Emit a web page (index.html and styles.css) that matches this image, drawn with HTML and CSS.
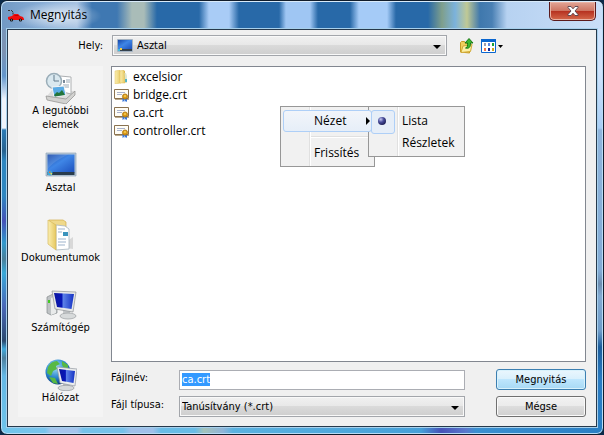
FILE: index.html
```html
<!DOCTYPE html>
<html lang="hu">
<head>
<meta charset="utf-8">
<title>Megnyitás</title>
<link rel="stylesheet" href="styles.css">
</head>
<body>
<svg class="defs" width="0" height="0" aria-hidden="true">
  <defs>
    <linearGradient id="screen" x1="0" y1="0" x2="1" y2="1"><stop offset="0" stop-color="#1747a8"/><stop offset=".45" stop-color="#3f86e6"/><stop offset="1" stop-color="#1d50bd"/></linearGradient>
    <linearGradient id="navy" x1="0" y1="0" x2="1" y2="0"><stop offset="0" stop-color="#0a14a0"/><stop offset=".4" stop-color="#0717b8"/><stop offset=".45" stop-color="#5d83e8"/><stop offset="1" stop-color="#1431c4"/></linearGradient>
    <linearGradient id="folder" x1="0" y1="0" x2="1" y2="0"><stop offset="0" stop-color="#fbeeb0"/><stop offset="1" stop-color="#e6c860"/></linearGradient>
    <radialGradient id="globe" cx=".4" cy=".3" r=".7"><stop offset="0" stop-color="#a5e2fa"/><stop offset=".6" stop-color="#2a86cc"/><stop offset="1" stop-color="#0b3f86"/></radialGradient>
    <radialGradient id="ball" cx=".35" cy=".3" r=".7"><stop offset="0" stop-color="#c5c8f0"/><stop offset=".5" stop-color="#4a4e9c"/><stop offset="1" stop-color="#20225c"/></radialGradient>
    <symbol id="cert" viewBox="0 0 16 14">
      <path d="M.5 1.500h14v9H.5z" fill="#fffdf6" stroke="#8a7250"/>
      <path d="M1 11.500h14" stroke="#b9a98d"/>
      <path d="M3 4.500h8M3 6.500h5" stroke="#a9b2cc"/>
      <path d="M8.500 10v4l1.500-1 .5 1v-4zM11 10v4l.5-1 1.500 1v-4z" fill="#3b78d8"/>
      <circle cx="11" cy="8.500" r="2.600" fill="#d99a19" stroke="#a66b08" stroke-width=".7"/>
      <circle cx="11" cy="8" r="1" fill="#f7cf55"/>
    </symbol>
  </defs>
</svg>
<main class="window">
  <header class="titlebar">
    <svg class="app-icon" viewBox="0 0 16 16" aria-hidden="true">
      <path d="M0 2.500h2M3 2.500h1M4 3.500h1M5 4.500v2" stroke="#333" stroke-width="1" fill="none"/>
      <path d="M0 9l4-1 2-2h4l2 2 3 1 1 2v1H1L0 11z" fill="#f00d0d"/>
      <path d="M6 8l1-1h3l1 1z" fill="#c30000"/>
      <circle cx="3.500" cy="12" r="1.600" fill="#111"/><circle cx="12.500" cy="12" r="1.600" fill="#111"/>
      <path d="M3 12h1M12 12h1" stroke="#bbb"/>
    </svg>
    <h1>Megnyitás</h1>
    <button class="close" type="button" aria-label="Bezárás">
      <svg viewBox="0 0 12 10" aria-hidden="true"><path d="M1 .5h3l2 2.300L8 .5h3v1L8 5l3 3.500v1H8L6 7.200 4 9.500H1v-1L4 5 1 1.500z" fill="#fff" stroke="#564049" stroke-width=".9"/></svg>
    </button>
  </header>
  <form class="client">
    <div class="location">
      <label for="place">Hely:</label>
      <div class="combo place">
        <svg class="combo-icon" viewBox="0 0 16 13" aria-hidden="true"><path d="M.5.5h15v12H.5z" fill="#c3ccd6" stroke="#a3b2c2"/><path d="M1 1h14v9H1z" fill="url(#screen)"/><path d="M1 10h14v2H1z" fill="#35424e"/><path d="M1 10h2v2H1z" fill="#3ec0e0"/><path d="M3 9h2v2H3z" fill="#f6cf45"/></svg>
        <select id="place"><option>Asztal</option></select>
      </div>
      <button class="tool up" type="button" aria-label="Egy szinttel feljebb">
        <svg viewBox="0 0 14 16" aria-hidden="true">
          <path d="M.5 4.500l1-1h3l1 1.500h4V15l-9-1z" fill="#f0cf5d" stroke="#c69c25"/>
          <path d="M1 14.500L3 8l9-1.500-1.500 7z" fill="#fdf0a4" stroke="#d2aa36"/>
          <path d="M5.500 10C8 9.500 7.500 7 7.500 5H5l4-4.500L13 5h-2.500c.3 4-1.500 6-5 5z" fill="#3db92f" stroke="#12700f" stroke-width=".9"/>
        </svg>
      </button>
      <button class="tool view" type="button" aria-label="Nézet">
        <svg viewBox="0 0 22 14" aria-hidden="true">
          <path d="M.5.5h14v13H.5z" fill="#fff" stroke="#0a66cf"/><path d="M0 0h15v3H0z" fill="#0a66cf"/>
          <path d="M3 4h2v3H3z" fill="#9d9dad"/><path d="M7 4h2v3H7z" fill="#5b86e5"/><path d="M11 4h2v3h-2z" fill="#1da037"/>
          <path d="M3 9h2v3H3z" fill="#f0764d"/><path d="M7 9h2v3H7z" fill="#152b98"/><path d="M11 9h2v3h-2z" fill="#d2a51d"/>
          <path d="M17 6h5l-2.500 3z" fill="#000"/>
        </svg>
      </button>
    </div>
    <nav class="places" aria-label="Helyek">
      <a href="#recent" class="item">
        <svg viewBox="0 0 32 32" aria-hidden="true">
          <path d="M2 24l5-6 23 1-9 9z" fill="#ddd"/>
          <path d="M15 4l11 1v17l-12-3z" fill="#fff" stroke="#adb0b2"/><path d="M18 8h2v3h-2z" fill="#789"/><path d="M21 8h4M21 10h4M18 13h6M18 15h6" stroke="#9aa9b6"/>
          <circle cx="9" cy="9" r="7.500" fill="#d9e8ef" stroke="#9aadb8" stroke-width="1.500"/><path d="M9 3v6h5" fill="none" stroke="#647c8e"/>
          <path d="M7 15l12-1 2 9-12 2z" fill="#5aabe4" stroke="#f6f6f6"/><path d="M9 23l3-3 2 1 3-3 3 5-10 1.500z" fill="#23753a"/>
          <path d="M1 24l20 3 9-8v4l-9 9L2 28z" fill="#d2d2d0" stroke="#8d8d8b" stroke-width=".7"/>
        </svg><span>A legutóbbi elemek</span></a>
      <a href="#desktop" class="item">
        <svg viewBox="0 0 32 32" aria-hidden="true"><path d="M1 4h30v23H1z" fill="#b8c9d8" stroke="#91a5b8" stroke-width=".7"/><path d="M2.500 5.500h27v18h-27z" fill="url(#screen)"/><path d="M2.500 5.500h21c-9 4-17 9-21 15z" fill="#fff" opacity=".12"/><path d="M2.500 23h27v3h-27z" fill="#293c4d"/><circle cx="5" cy="24" r="2.500" fill="#39a9dc"/><path d="M4 22.500h1.500v1.500H4z" fill="#ed692f"/><path d="M5.500 24H7v1.500H5.500z" fill="#f4d94a"/></svg>
        <span>Asztal</span></a>
      <a href="#documents" class="item">
        <svg viewBox="0 0 32 32" aria-hidden="true"><path d="M14 28l14 2V18z" fill="#d8d8d8"/><path d="M4 1h14l3 2v22l-8 4-9-5z" fill="#efd98b" stroke="#d2ae4b" stroke-width=".7"/><path d="M11 6l9 1 4 3v20l-13 1z" fill="#fff" stroke="#a8b6c2" stroke-width=".8"/><path d="M13 10h7M13 13h4M13 20h8M13 23h8M13 26h7" stroke="#9db3cc"/><path d="M18 13h5v4h-5z" fill="#3b94bd"/><path d="M3 1l8 5v25l-8-6z" fill="url(#folder)" stroke="#d6b95d" stroke-width=".7"/></svg>
        <span>Dokumentumok</span></a>
      <a href="#computer" class="item">
        <svg viewBox="0 0 32 32" aria-hidden="true"><path d="M2 8l6-3 4 2v17l-6 2-4-2z" fill="#bfc3c5" stroke="#858b8e" stroke-width=".7"/><path d="M6 9l5-2v17l-5 2z" fill="#e9ebeb"/><path d="M3 11h2v3H3z" fill="#42cb22"/><path d="M18 21h7v5h-7z" fill="#c5c8ca"/><ellipse cx="23" cy="27" rx="8" ry="3" fill="#d7dadb" stroke="#999da0" stroke-width=".7"/><path d="M7 2l24 1-3 20-18-3z" fill="#e6e8e8" stroke="#8c9195" stroke-width=".7"/><path d="M9 4l20 1-2.500 15L12 18z" fill="url(#navy)"/></svg>
        <span>Számítógép</span></a>
      <a href="#network" class="item">
        <svg viewBox="0 0 32 32" aria-hidden="true"><circle cx="13" cy="13" r="12.500" fill="url(#globe)"/><path d="M3 8c2-4 5-6 9-6l3 3-4 2 1 3-4 2-2 5-4-3zM17 2l6 4v3h-4l-2-3zM4 18l6 1 3 6-5-1z" fill="#58b944"/><path d="M18 24h7v4h-7z" fill="#bbbfc2"/><ellipse cx="21" cy="29" rx="8" ry="2.700" fill="#d6d9da" stroke="#969b9f" stroke-width=".7"/><path d="M12 8l20 2-2 17-15-3z" fill="#eceeee" stroke="#9298a0" stroke-width=".7"/><path d="M14 10l16 2-1.500 12L17 22z" fill="url(#navy)"/></svg>
        <span>Hálózat</span></a>
    </nav>
    <section class="files">
      <ul>
        <li><svg viewBox="0 0 16 14" aria-hidden="true"><path d="M7 1h4v12H7z" fill="#ddb84c"/><path d="M9 3h3l1 3v7H8z" fill="#dfe6d0"/><path d="M11 9h2v3h-2z" fill="#4bb5cf"/><path d="M1 1l5-1 1 13-6 1z" fill="url(#folder)" stroke="#e1c362" stroke-width=".5"/><path d="M6 1l4-1 1 13H6z" fill="url(#folder)" stroke="#ddba52" stroke-width=".5"/></svg>excelsior</li>
        <li><svg viewBox="0 0 16 14" aria-hidden="true"><use href="#cert"/></svg>bridge.crt</li>
        <li><svg viewBox="0 0 16 14" aria-hidden="true"><use href="#cert"/></svg>ca.crt</li>
        <li><svg viewBox="0 0 16 14" aria-hidden="true"><use href="#cert"/></svg>controller.crt</li>
      </ul>
      <div class="menu" role="menu">
        <button class="menu-item active" type="button" role="menuitem">Nézet<svg class="arrow" viewBox="0 0 4 8" aria-hidden="true"><path d="M0 0l4 4-4 4z"/></svg></button>
        <hr>
        <button class="menu-item" type="button" role="menuitem">Frissítés</button>
      </div>
      <div class="menu submenu" role="menu">
        <button class="menu-item checked" type="button" role="menuitemradio" aria-checked="true"><svg class="dot" viewBox="0 0 8 8" aria-hidden="true"><circle cx="4" cy="4" r="4" fill="url(#ball)"/></svg>Lista</button>
        <button class="menu-item" type="button" role="menuitemradio" aria-checked="false">Részletek</button>
      </div>
    </section>
    <div class="fields">
      <label for="filename">Fájlnév:</label>
      <input id="filename" type="text" value="ca.crt" autocomplete="off" spellcheck="false">
      <button class="action primary" type="submit">Megnyitás</button>
      <label for="type">Fájl típusa:</label>
      <div class="combo"><select id="type"><option>Tanúsítvány (*.crt)</option></select></div>
      <button class="action" type="button">Mégse</button>
    </div>
  </form>
</main>
<script src="script.js"></script>
</body>
</html>
```
FILE: styles.css
```css
* { box-sizing: border-box; }
body {
  margin: 0;
  background: #0b2a4a;
  color: #000;
  font: 11px/14px "DejaVu Sans Condensed", "Noto Sans", sans-serif;
}
button, input, select { font: inherit; color: inherit; }
svg { display: block; flex: none; }
.defs { position: absolute; }

.window {
  display: flex;
  flex-direction: column;
  min-height: 100vh;
  padding: 0 6px 7px;
  border: 1px solid #101c2b;
  border-radius: 7px;
  box-shadow: inset 0 0 0 1px #b9dcf5;
  background:
    linear-gradient(90deg, #6fc4ea, #78c4ec 44px, #a5c4ec 50px 76px, #74c2ea 82px 122px, #9fc0ea 130px 152px, #68bce6 160px 194px, #a3c2ba 203px, #8fb4d8 222px, #5ab2e0 232px, #46a0d8 420px, #4652b8 440px, #5a78cc 465px, #3a90d0 475px, #2a7fc4) bottom / 100% 8px no-repeat,
    linear-gradient(#cfe3fc 0, #cfe3fc 70px, #a8cdf5 127px, #8fb4dc 129px, #83abd5 270px, #6d8db0 283px, #83aad2 295px, #6f9cc9 330px, #1c5d9c 346px, #2a7cc4 380px, #2a7fc4) right / 8px 100% no-repeat,
    linear-gradient(#7199c4 0, #7d93b2 50px, #6396cb 75px, #eef3fb 98px, #eef3fb 127px, #2a7ab5 129px, #28628f 150px, #2e86c0 160px, #2e86c0 195px, #4552b8 220px, #3098cc 242px, #4a7f9a 258px, #38a8d8 272px, #4a68b8 305px, #2a4a70 340px, #3fa9dc 348px, #4d7f9e 357px, #64b8e6 375px, #6fc4ea) left / 8px 100% no-repeat,
    #2a76b5;
}
.titlebar {
  display: flex;
  align-items: flex-start;
  height: 28px;
  margin: 0 -5px;
  padding: 0 6px 0 5px;
  border-radius: 6px 6px 0 0;
  border-top: 1px solid #d9ebfa;
  background:
    radial-gradient(ellipse at center, #ffffffb0, #ffffff00 70%) 10px 0 / 90px 28px no-repeat,
    linear-gradient(90deg, #7199c4, #88add6 40px, #a8c3e2 75px, #3f78b2 90px, #3f78b2 115px, #a9bcb8 130px, #a9bcb8 142px, #2869a8 155px, #2869a8 197px, #a9ccf6 207px, #a9ccf6 227px, #2869a8 237px, #2869a8 277px, #9fc6f3 284px, #9fc6f3 308px, #2869a8 316px, #2869a8 348px, #a5cbf7 357px, #a5cbf7 385px, #2869a8 394px, #2869a8 426px, #7f9f8c 440px, #7bb2dc 453px, #c0c995 465px, #3f78ad 478px, #4a80b4 490px, #b7d2f1 505px, #c9def8);
}
.titlebar h1 { flex: 1; margin: 4px 0 0 6px; font: 400 12px/17px "Open Sans", "Noto Sans", sans-serif; }
.app-icon { width: 16px; height: 16px; margin: 6px 0 0 1px; }
.close {
  display: grid;
  place-items: center;
  width: 47px;
  height: 19px;
  padding: 0;
  border: 1px solid #5b1a1c;
  border-top: 0;
  border-radius: 0 0 5px 5px;
  box-shadow: inset 0 0 0 1px #e9b3a5;
  background: linear-gradient(#e3a596, #ce7663 48%, #b5301f 50%, #d5694b);
}
.close svg { width: 12px; height: 10px; }

.client {
  flex: 1;
  display: grid;
  grid-template: auto 1fr auto / 85px 1fr;
  column-gap: 8px;
  padding: 5px 10px 9px;
  border: 1px solid #26394c;
  box-shadow: 0 0 0 1px #a7d0ec;
  background: #f0f0f0;
}
.location { grid-column: 1 / -1; display: flex; align-items: center; padding-bottom: 10px; }
.location label { width: 85px; text-align: right; }
.place { flex: 1; margin: 0 13px 0 9px; }
.tool { padding: 0; border: 0; background: none; }
.up { width: 14px; }
.view { width: 22px; margin: 0 83px 0 7px; }

.combo {
  position: relative;
  display: flex;
  align-items: center;
  height: 21px;
  border: 1px solid #a3a6ab;
  box-shadow: inset 0 0 0 1px #f9f9f9;
  background: linear-gradient(#f1f1f1, #e8e8e8 48%, #dadada 50%, #cecece);
}
.combo::after {
  content: "";
  position: absolute;
  right: 5px;
  top: 9px;
  border: 4px solid transparent;
  border-top-color: #000;
  border-bottom: 0;
  pointer-events: none;
}
.combo select {
  flex: 1;
  min-width: 0;
  height: 19px;
  padding: 0 20px 0 2px;
  border: 0;
  outline: 0;
  appearance: none;
  background: none;
}
.combo-icon { width: 16px; height: 13px; margin: 0 2px 0 4px; }

.places {
  grid-row: 2 / 4;
  display: flex;
  flex-direction: column;
  gap: 24px;
  padding-top: 6px;
  background: #f4f4f4;
}
.item { display: flex; flex-direction: column; align-items: center; color: inherit; text-align: center; text-decoration: none; }
.item:first-child { margin-bottom: -7px; }
.item svg { width: 32px; height: 32px; }
.item span { max-width: 80px; }
.item:first-child span { max-width: 64px; }

.files { position: relative; min-height: 190px; border: 1px solid #828790; background: #fff; }
.files ul { margin: 0; padding: 1px 0 0 2px; list-style: none; font: 12px/18px "Open Sans", "Noto Sans", sans-serif; }
.files li { display: flex; align-items: center; gap: 3px; }
.files li svg { width: 16px; height: 14px; }

.menu {
  position: absolute;
  left: 168px;
  top: 39px;
  width: 95px;
  padding: 3px 2px 2px;
  border: 1px solid #979797;
  background: linear-gradient(90deg, #f1f1f1 28px, #e0e0e0 28px 29px, #fff 29px 30px, #f1f1f1 30px);
  font: 12px/16px "Open Sans", "Noto Sans", sans-serif;
}
.submenu { z-index: 1; left: 256px; width: 97px; }
.menu-item {
  position: relative;
  display: flex;
  align-items: center;
  width: 100%;
  height: 22px;
  padding: 0 0 0 30px;
  border: 1px solid transparent;
  border-radius: 3px;
  background: none;
  text-align: left;
}
.active { z-index: 2; border-color: #aecff7; background: linear-gradient(#f2f5fa, #e6eef8); }
.menu hr { height: 2px; margin: 4px 2px 4px 28px; border: 0; border-top: 1px solid #e0e0e0; background: #fff; }
.arrow { position: absolute; right: 1px; width: 4px; height: 8px; }
.dot { position: absolute; left: 6px; width: 8px; height: 8px; }
.checked::before {
  content: "";
  position: absolute;
  left: -1px;
  top: -1px;
  width: 22px;
  height: 22px;
  border: 1px solid #aecff7;
  border-radius: 3px;
  background: #e6eef8;
}

.fields {
  display: grid;
  grid-template-columns: 60px 1fr 90px;
  column-gap: 8px;
  row-gap: 6px;
  align-items: center;
  padding-top: 7px;
}
.fields label { padding-bottom: 3px; }
.fields input {
  min-width: 0;
  height: 20px;
  margin-right: 23px;
  padding: 0 2px;
  border: 1px solid #abadb3;
  outline: 0;
  background: #fff;
}
.fields input::selection { color: #fff; background: #3399ff; }
.fields .combo { margin-right: 23px; }
.action {
  height: 21px;
  padding: 0;
  border: 1px solid #707070;
  border-radius: 3px;
  box-shadow: inset 0 0 0 1px #fafafa;
  background: linear-gradient(#f2f2f2, #ebebeb 48%, #dddddd 50%, #cfcfcf);
}
.primary {
  border-color: #3c7fb1;
  box-shadow: inset 0 0 0 1px #d9f2fc;
  background: linear-gradient(#eaf6fd, #d9f0fc 48%, #bee6fd 50%, #a7d9f5);
}
```
FILE: script.js
```js
const filename = document.getElementById("filename");
filename.focus();
filename.select();
```
